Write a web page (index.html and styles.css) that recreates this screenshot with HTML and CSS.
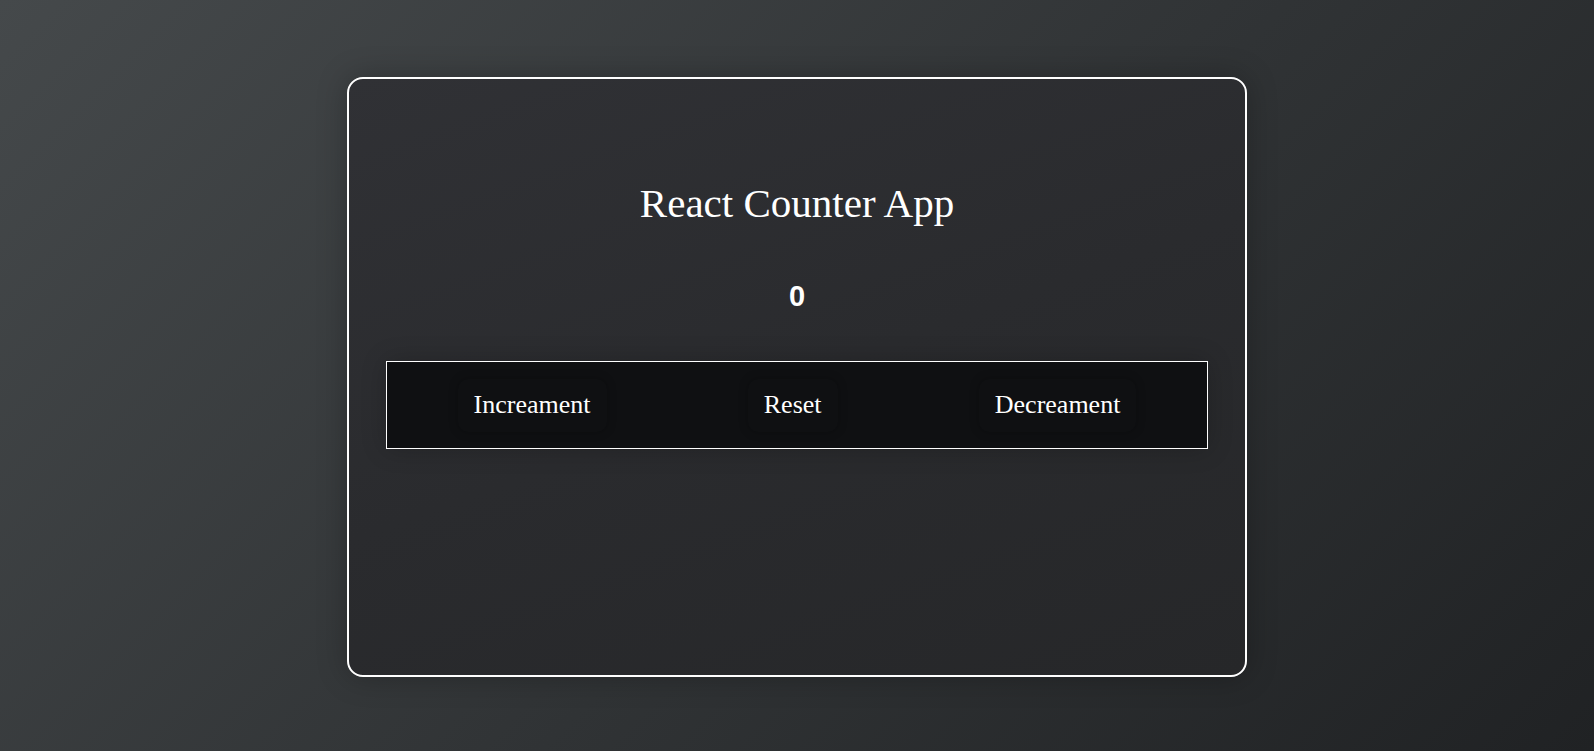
FILE: index.html
```html
<!DOCTYPE html>
<html lang="en">
<head>
<meta charset="utf-8">
<title>React Counter App</title>
<link rel="stylesheet" href="styles.css">
</head>
<body>
  <main class="card">
    <h1 class="title">React Counter App</h1>
    <div class="count">0</div>
    <div class="controls">
      <button class="btn">Increament</button>
      <button class="btn">Reset</button>
      <button class="btn">Decreament</button>
    </div>
  </main>
</body>
</html>
```

FILE: styles.css
```css
html, body {
  margin: 0;
  height: 100%;
}

body {
  background: linear-gradient(135deg, #45494b 0%, #303335 55%, #202224 100%);
  display: flex;
  justify-content: center;
  align-items: flex-start;
  padding-top: 77px;
  box-sizing: border-box;
  font-family: "Liberation Serif", "Times New Roman", serif;
  color: #ffffff;
}

.card {
  width: 900px;
  height: 600px;
  box-sizing: border-box;
  border: 2px solid #ffffff;
  border-radius: 16px;
  background: linear-gradient(160deg, #303135 0%, #2a2b2e 50%, #262729 100%);
  box-shadow: 0 0 30px rgba(0, 0, 0, 0.25);
  padding: 100px 37px 0;
  display: flex;
  flex-direction: column;
  align-items: stretch;
}

.title {
  margin: 0;
  font-size: 41px;
  line-height: 48px;
  font-weight: 400;
  text-align: center;
}

.count {
  margin-top: 51px;
  font-family: "Liberation Sans", Arial, sans-serif;
  font-weight: 700;
  font-size: 29px;
  line-height: 36px;
  text-align: center;
}

.controls {
  margin-top: 47px;
  border: 1px solid #ffffff;
  background: #0f1012;
  padding: 17px 0 16px;
  display: flex;
  justify-content: space-around;
  box-shadow: 0 0 24px rgba(0, 0, 0, 0.2);
}

.btn {
  font-family: "Liberation Serif", "Times New Roman", serif;
  font-size: 26px;
  line-height: 30px;
  color: #ffffff;
  background: #0f1012;
  border: none;
  border-radius: 10px;
  padding: 11px 16px 12px;
  box-shadow: 0 0 10px rgba(0, 0, 0, 0.25);
  cursor: pointer;
}
```
